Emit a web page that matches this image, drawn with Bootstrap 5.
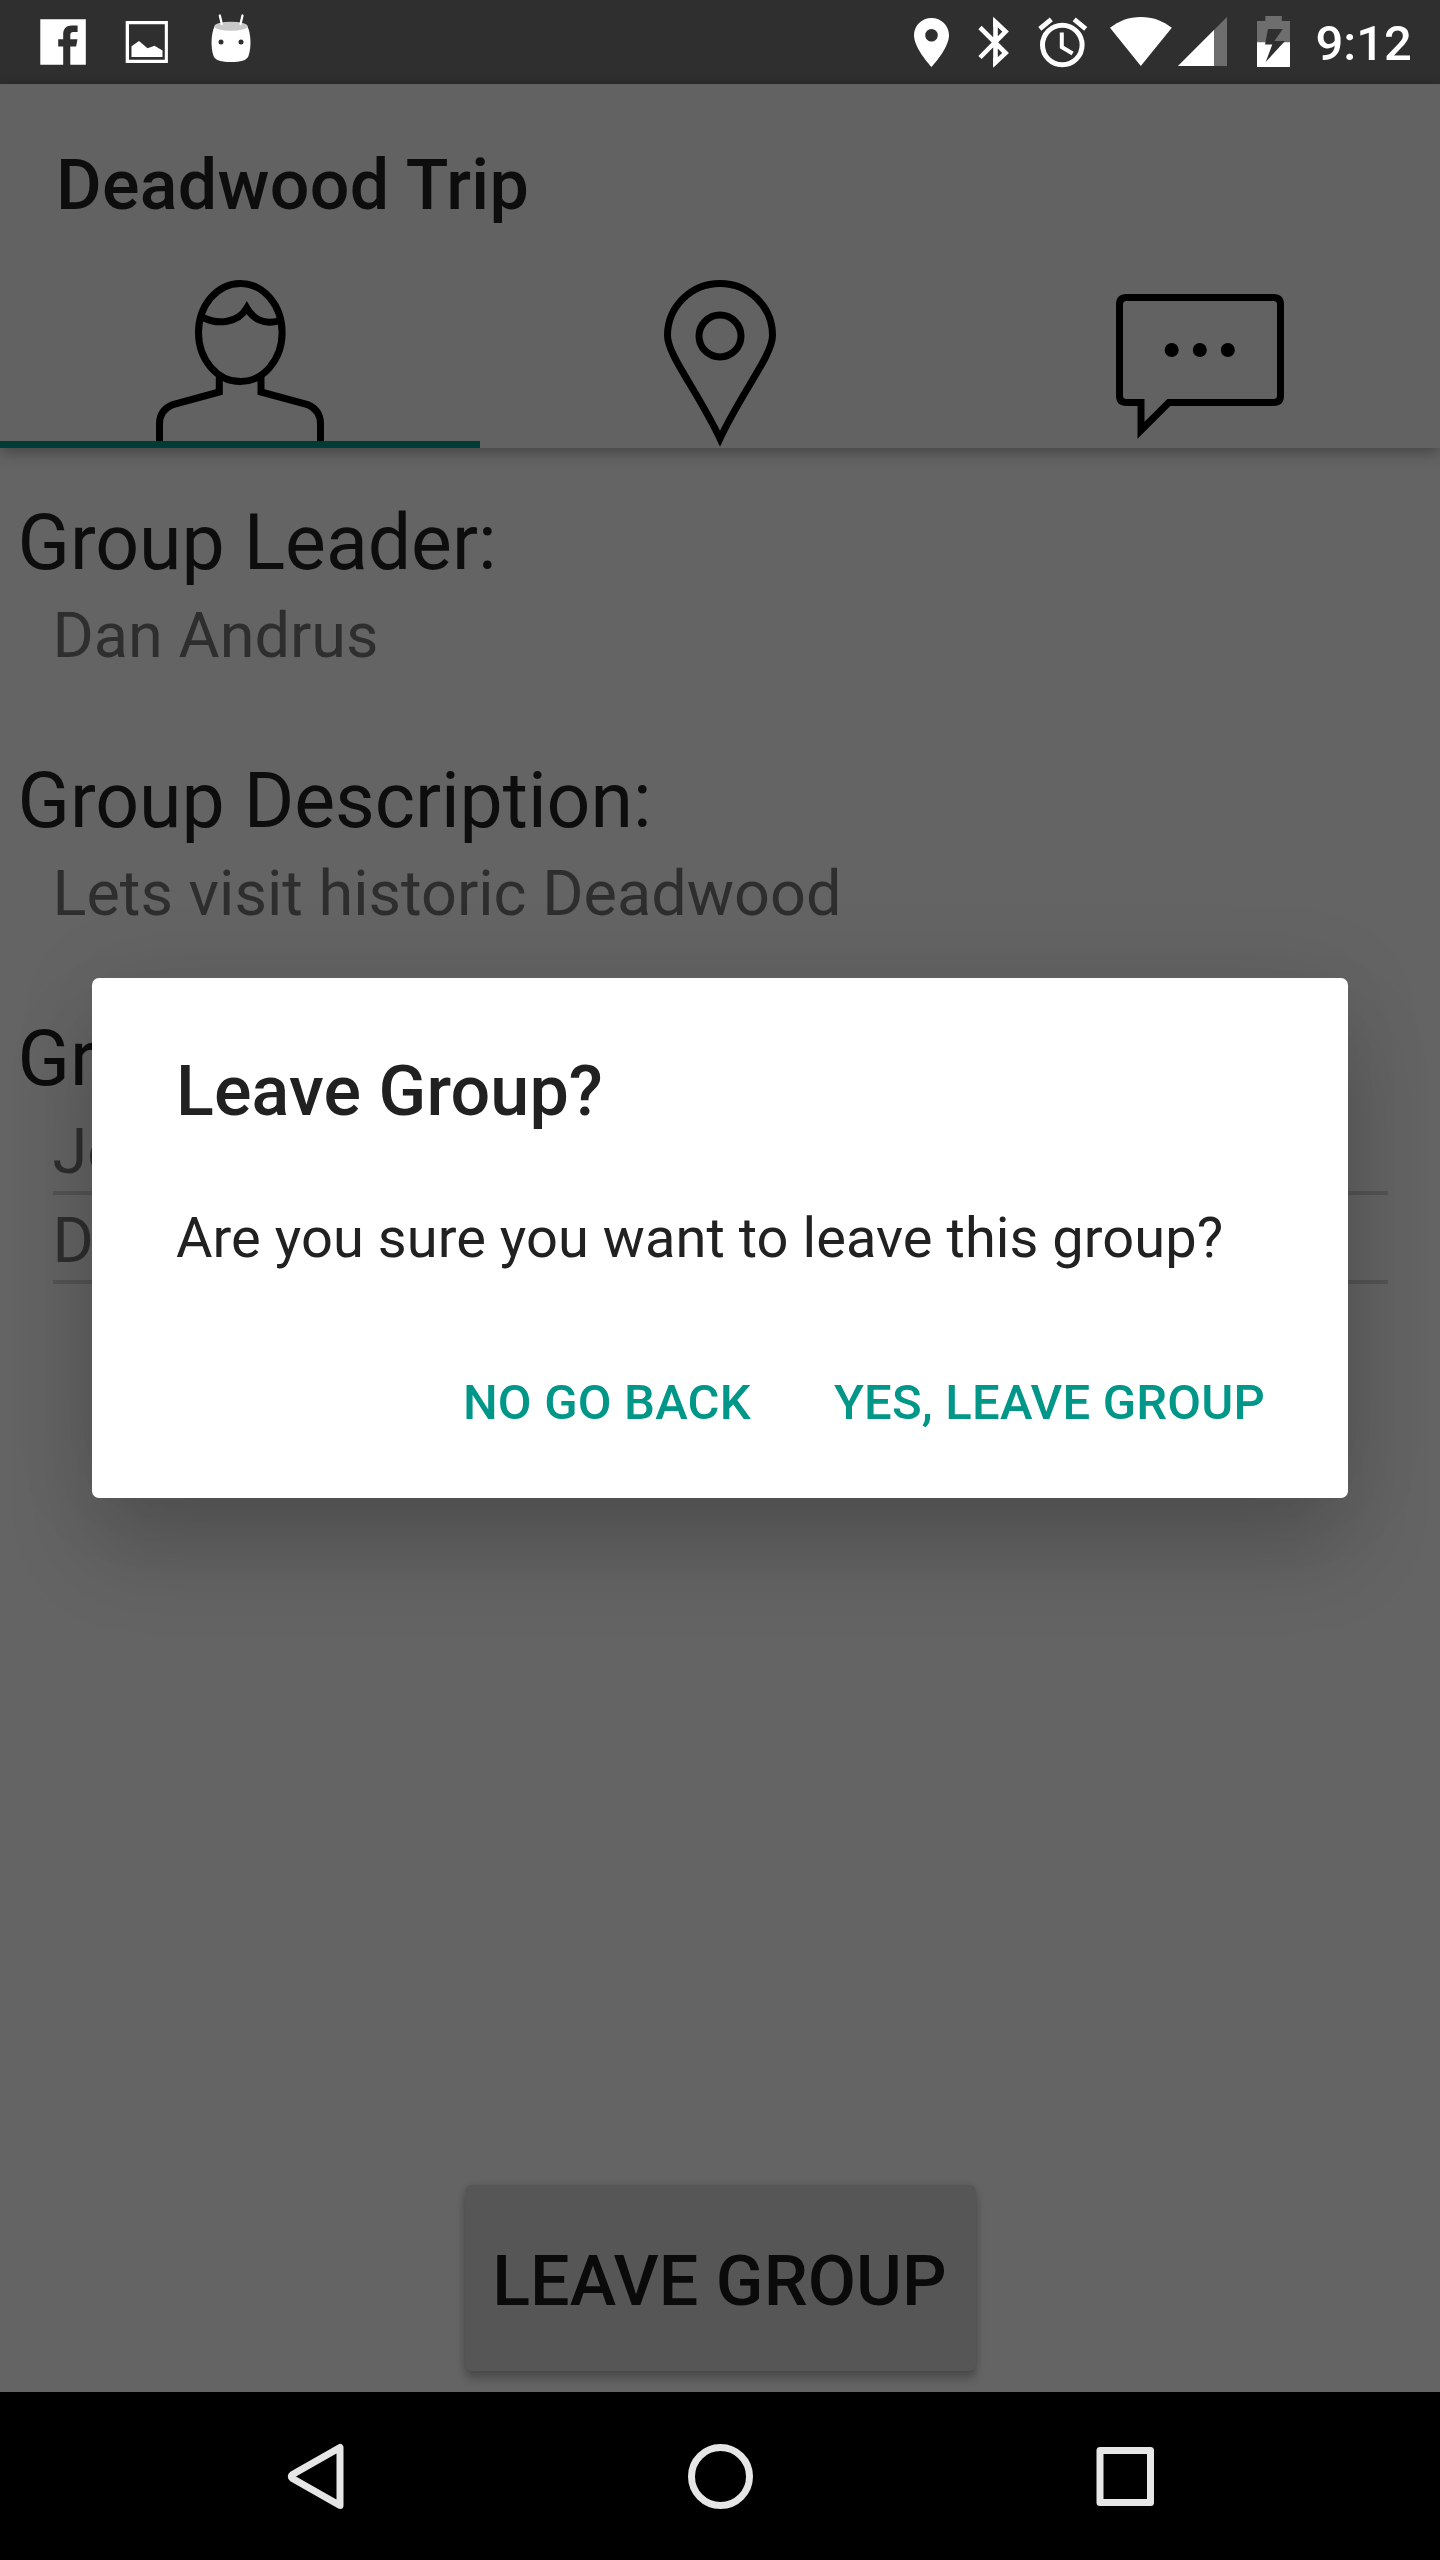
<!DOCTYPE html>
<html lang="en">
<head>
<meta charset="utf-8">
<meta name="viewport" content="width=device-width, initial-scale=1">
<title>Deadwood Trip</title>
<link rel="stylesheet" href="https://cdn.jsdelivr.net/npm/bootstrap@5.3.0/dist/css/bootstrap.min.css">
<style>
  body { margin: 0; background: #000; font-family: Roboto, sans-serif; }
  svg { display: block; flex: none; }
  .screen { width: 1440px; height: 2560px; background: #646464; color: #0d0d0d; overflow: hidden; }
  .status-bar { height: 84px; background: #2f2f2f; flex: none; }
  .clock-text { width: 146px; padding-left: 21.500px; font-size: 49px; line-height: 58px; font-weight: 500; color: #fff; margin-top: 4px; flex: none; }
  .app-header { height: 364px; background: #626262; flex: none; box-shadow: 0 4px 14px rgba(0,0,0,.32); }
  .app-title { font-size: 70px; line-height: 82px; font-weight: 500; letter-spacing: .3px; margin: 0; padding: 60px 56px 0; height: 192px; }
  .tab-item { height: 172px; padding: 0; border: 0; background: none; }
  .tab-on { border-bottom: 7px solid #003c36; }
  .content { padding-top: 50px; }
  .sect-title { font-size: 77px; line-height: 90px; font-weight: 400; letter-spacing: -.05px; margin: 0; padding-left: 17.5px; }
  .sect-text { font-size: 63px; line-height: 95px; margin: 0 52.5px 73px; color: #2e2e2e; }
  .member-list { margin: 0 52.5px; }
  .member { font-size: 63px; line-height: 79px; color: #2e2e2e; border-bottom: 4px solid #545454; padding: 6px 0 0; }
  .member:first-child { padding-top: 8px; }
  .leave-btn { width: 511px; height: 186px; margin-bottom: 21px; padding: 6px 1px 0 0; background: #565656; border: 0; border-radius: 7px; color: #0a0a0a; font-size: 70px; line-height: 82px; font-weight: 500; letter-spacing: .1px; box-shadow: 0 8px 8px rgba(0,0,0,.22), 0 0 7px rgba(0,0,0,.12); }
  .nav-keys { height: 168px; background: #000; flex: none; }
  .confirm { top: 978px; left: 92px; width: 1256px; height: 520px; padding: 72px 83px 0 84px; background: #fff; border: 0; border-radius: 7px; color: #212121; box-shadow: 0 54px 90px -4px rgba(0,0,0,.19), 0 0 90px rgba(0,0,0,.08); }
  .confirm-title { font-size: 70px; line-height: 82px; font-weight: 500; letter-spacing: .15px; margin: 0 0 73px; }
  .confirm-text { font-size: 56px; line-height: 66px; letter-spacing: .05px; margin: 0 0 103px; white-space: nowrap; }
  .confirm-actions { gap: 83px; }
  .confirm-btn { font-size: 49px; line-height: 58px; font-weight: 500; letter-spacing: .2px; color: #009688; padding: 0; border: 0; background: none; }
</style>
</head>
<body>
<div class="screen d-flex flex-column position-relative">

  <div class="status-bar d-flex align-items-center">
    <svg width="260" height="84" viewBox="0 0 260 84">
      <path fill="#fff" fill-rule="evenodd" d="M40.3 19.3h45.5v45.4H70.3V46.6h5.8l1.4-7.3h-7.2v-4.5c0-1.7 1-2.8 3-2.8h4.3v-6.6h-5.800c-5.5 0-8.6 3.2-8.6 8.6v5.3h-5v7.3h5v18.1H40.3z"/>
      <path fill="#fff" fill-rule="evenodd" d="M125.700 21h42.2v42h-42.2zM129 24.2v35.6h35.8V24.2z"/>
      <path fill="#fff" d="M131.500 57V46.300l7.500-5.300 8.500 7.300 7-2.600 8 4.800V57z"/>
      <path fill="#fff" d="M214.500 26.500C211 34 210.500 47 213.500 56 215 60.500 222 62 231 62s16-1.500 17.500-6c3-9 2.500-22-1-29.500z"/>
      <ellipse cx="231" cy="26.300" rx="16.600" ry="4.500" fill="#c8c8c8"/>
      <path stroke="#fff" stroke-width="2.300" stroke-linecap="round" d="M219.800 15.500l2 8.500M242.500 15.500l-2 8.500"/>
      <circle cx="221" cy="42" r="2.500" fill="#2f2f2f"/><circle cx="241" cy="42" r="2.500" fill="#2f2f2f"/>
    </svg>
    <svg class="ms-auto" width="390" height="84" viewBox="904 0 390 84">
      <path fill="#fff" fill-rule="evenodd" d="M931.500 18c-9.700 0-17.500 7.700-17.500 17.300C914 48.500 931.500 67 931.500 67S949 48.500 949 35.300C949 25.700 941.200 18 931.500 18zm0 11a6.300 6.300 0 1 1 0 12.600 6.300 6.300 0 0 1 0-12.600z"/>
      <path fill="none" stroke="#fff" stroke-width="4.600" d="M980 27.500L1005.600 53 995.500 62.500V22L1005.600 31.500 980 57.500"/>
      <path fill="#fff" d="M993.200 18l4.600 4v5h-4.600zM993.200 67l4.600-4v-5h-4.600z"/>
      <circle cx="1062.300" cy="45" r="19.800" fill="none" stroke="#fff" stroke-width="5"/>
      <path fill="none" stroke="#fff" stroke-width="4" d="M1061.800 32.500v14.500l10.800 6.500"/>
      <path stroke="#fff" stroke-width="4.800" d="M1039.800 28.800L1051.300 19.300M1074.200 19.300L1085.700 28.800"/>
      <path fill="#fff" d="M1110 27.800C1118.500 21 1129 17 1140.800 17s22.500 4 31 10.800L1140.800 66z"/>
      <path fill="#6e6e6e" d="M1178 66L1227 17V66z"/><path fill="#fff" d="M1178 66L1214 30V66z"/>
      <path fill="#6e6e6e" d="M1265.300 16h16.500v5H1290v22h-33V21h8.300z"/><path fill="#fff" d="M1257 42.300h33V67h-33z"/>
      <path fill="#2f2f2f" d="M1268 29h14.800l-8.400 12h10.600L1265.700 62l6.600-17.500H1265z"/>
    </svg>
    <div class="clock-text">9:12</div>
  </div>

  <header class="app-header">
    <h1 class="app-title">Deadwood Trip</h1>
    <nav class="row g-0">
      <button class="tab-item tab-on col-4 d-flex justify-content-center" aria-label="Group">
        <svg width="180" height="165" viewBox="150 276 180 165" fill="none" stroke="#000" stroke-width="7">
          <ellipse cx="240.300" cy="332.500" rx="41.800" ry="49"/>
          <path stroke-miterlimit="8" d="M203 317.500C218 325 238 323 246.800 308 252 317 262 326 280 320.500"/>
          <path d="M219.300 377V392L173 404.500C164 408 159.500 415 159.500 424V442M261 377V392L307.500 404.500C316 408 320.500 415 320.500 424V442"/>
        </svg>
      </button>
      <button class="tab-item col-4 d-flex justify-content-center" aria-label="Map">
        <svg width="120" height="172" viewBox="660 276 120 172" fill="none" stroke="#000" stroke-width="7">
          <path stroke-miterlimit="8" d="M720 438.500C697 390 667.500 355 667.500 335.500a52.500 52 0 0 1 105 0C772.500 355 743 390 720 438.500z"/>
          <circle cx="720" cy="336" r="21"/>
        </svg>
      </button>
      <button class="tab-item col-4 d-flex justify-content-center" aria-label="Chat">
        <svg width="180" height="172" viewBox="1110 276 180 172" fill="none" stroke="#000" stroke-width="7">
          <path stroke-miterlimit="8" d="M1126.500 297.500h147q7 0 7 7v91q0 7-7 7H1168.800L1141 430.300V402.500h-14.500q-7 0-7-7v-91q0-7 7-7z"/>
          <g fill="#000" stroke="none"><circle cx="1171.700" cy="350" r="7"/><circle cx="1199.800" cy="350" r="7"/><circle cx="1227.800" cy="350" r="7"/></g>
        </svg>
      </button>
    </nav>
  </header>

  <main class="content flex-grow-1 d-flex flex-column">
    <h2 class="sect-title">Group Leader:</h2>
    <p class="sect-text">Dan Andrus</p>
    <h2 class="sect-title">Group Description:</h2>
    <p class="sect-text">Lets visit historic Deadwood</p>
    <h2 class="sect-title">Gr</h2>
    <ul class="member-list list-unstyled">
      <li class="member">Jo</li>
      <li class="member">D</li>
    </ul>
    <button class="leave-btn btn mt-auto mx-auto">LEAVE GROUP</button>
  </main>

  <footer class="nav-keys">
    <svg width="1440" height="168" viewBox="0 2392 1440 168" fill="none" stroke="#e6e6e6" stroke-width="7" stroke-linejoin="round">
      <path d="M340 2447.500V2505.500L292.500 2478.500Q290 2476.500 292.500 2474.500z"/>
      <circle cx="720.500" cy="2476.500" r="29"/>
      <rect x="1100" y="2450.500" width="50.500" height="52"/>
    </svg>
  </footer>

  <div class="confirm position-absolute" role="dialog">
    <h2 class="confirm-title">Leave Group?</h2>
    <p class="confirm-text">Are you sure you want to leave this group?</p>
    <div class="confirm-actions d-flex justify-content-end">
      <button class="confirm-btn">NO GO BACK</button>
      <button class="confirm-btn">YES, LEAVE GROUP</button>
    </div>
  </div>
</div>
<script src="https://cdn.jsdelivr.net/npm/bootstrap@5.3.0/dist/js/bootstrap.bundle.min.js"></script>
</body>
</html>
